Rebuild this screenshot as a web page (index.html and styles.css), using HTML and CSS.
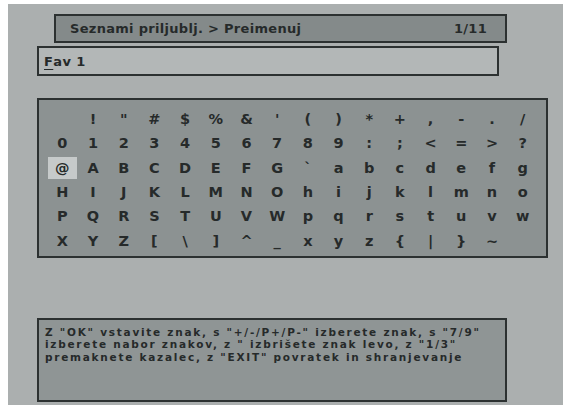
FILE: index.html
```html
<!DOCTYPE html>
<html>
<head>
<meta charset="utf-8">
<link rel="stylesheet" href="styles.css">
</head>
<body>
<div class="screen">
  <div class="titlebar">
    <span class="title">Seznami priljublj. &gt; Preimenuj</span>
    <span class="page">1/11</span>
  </div>
  <div class="field"><span class="cursor">F</span>av 1</div>
  <div class="keyboard">
    <span></span><span>!</span><span>"</span><span>#</span><span>$</span><span>%</span><span>&amp;</span><span>'</span><span>(</span><span>)</span><span>*</span><span>+</span><span>,</span><span>-</span><span>.</span><span>/</span>
    <span>0</span><span>1</span><span>2</span><span>3</span><span>4</span><span>5</span><span>6</span><span>7</span><span>8</span><span>9</span><span>:</span><span>;</span><span>&lt;</span><span>=</span><span>&gt;</span><span>?</span>
    <span class="sel">@</span><span>A</span><span>B</span><span>C</span><span>D</span><span>E</span><span>F</span><span>G</span><span>`</span><span>a</span><span>b</span><span>c</span><span>d</span><span>e</span><span>f</span><span>g</span>
    <span>H</span><span>I</span><span>J</span><span>K</span><span>L</span><span>M</span><span>N</span><span>O</span><span>h</span><span>i</span><span>j</span><span>k</span><span>l</span><span>m</span><span>n</span><span>o</span>
    <span>P</span><span>Q</span><span>R</span><span>S</span><span>T</span><span>U</span><span>V</span><span>W</span><span>p</span><span>q</span><span>r</span><span>s</span><span>t</span><span>u</span><span>v</span><span>w</span>
    <span>X</span><span>Y</span><span>Z</span><span>[</span><span>\</span><span>]</span><span>^</span><span>_</span><span>x</span><span>y</span><span>z</span><span>{</span><span>|</span><span>}</span><span>~</span><span></span>
  </div>
  <div class="help">
    <div class="line">Z "OK" vstavite znak, s "+/-/P+/P-" izberete znak, s "7/9"</div>
    <div class="line">izberete nabor znakov, z " izbrišete znak levo, z "1/3"</div>
    <div class="line">premaknete kazalec, z "EXIT" povratek in shranjevanje</div>
  </div>
</div>
</body>
</html>
```
FILE: styles.css
```css
html, body {
  margin: 0;
  padding: 0;
  background: #ffffff;
}
body {
  font-family: "DejaVu Sans", Verdana, sans-serif;
  color: #262a2a;
}
.screen {
  margin: 4px 0 0 8px;
  width: 555px;
  height: 401px;
  box-sizing: border-box;
  background: #abafaf;
  padding-top: 10px;
  display: flex;
  flex-direction: column;
}
.titlebar {
  margin-left: 46px;
  width: 453px;
  height: 29px;
  box-sizing: border-box;
  border: 2px solid #2c3131;
  background: #848a8a;
  display: flex;
  align-items: center;
  justify-content: space-between;
  padding: 0 18px 0 14px;
  font-weight: bold;
  font-size: 13px;
  letter-spacing: 0.3px;
}
.field {
  margin-top: 3px;
  margin-left: 29px;
  width: 462px;
  height: 30px;
  box-sizing: border-box;
  border: 2px solid #2c3131;
  background: #b3b7b7;
  display: flex;
  align-items: center;
  padding-left: 5px;
  font-weight: bold;
  font-size: 13px;
  letter-spacing: 0.4px;
}
.cursor {
  text-decoration: underline;
  text-underline-offset: 3px;
  text-decoration-thickness: 1px;
}
.keyboard {
  margin-top: 22px;
  margin-left: 29px;
  width: 511px;
  height: 160px;
  box-sizing: border-box;
  border: 2px solid #2c3131;
  background: #8c9292;
  display: grid;
  grid-template-columns: repeat(16, 30.7px);
  grid-auto-rows: 24.3px;
  padding: 7px 0 0 8px;
  font-weight: bold;
  font-size: 14.5px;
}
.keyboard span {
  display: flex;
  align-items: center;
  justify-content: center;
  margin: 1px 0;
}
.keyboard span.sel {
  background: #c6caca;
  margin: 1px 1px;
}
.help {
  margin-top: 60px;
  margin-left: 29px;
  width: 470px;
  height: 84px;
  box-sizing: border-box;
  border: 2px solid #2c3131;
  background: #8f9595;
  padding: 6px 0 0 6px;
  font-weight: bold;
  font-size: 10.5px;
  letter-spacing: 1.75px;
  display: flex;
  flex-direction: column;
}
.help .line {
  height: 12.3px;
  line-height: 12.3px;
  white-space: nowrap;
}
```
